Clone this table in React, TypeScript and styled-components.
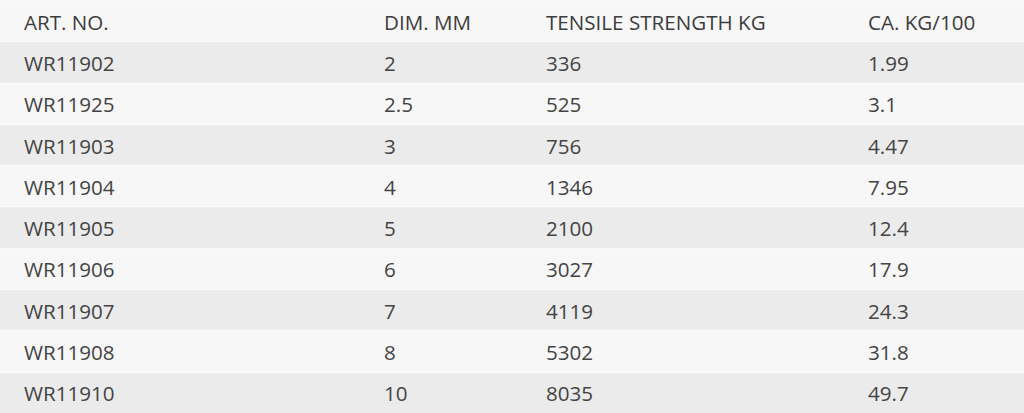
import * as React from 'react';
import styled, { createGlobalStyle } from 'styled-components';

const GlobalStyle = createGlobalStyle`
  html, body {
    margin: 0;
    padding: 0;
    background: #fff;
  }
  body {
    font-family: 'Open Sans', 'Liberation Sans', sans-serif;
  }
`;

const Table = styled.div`
  width: 1024px;
  display: grid;
  grid-template-columns: 360px 162px 322px 1fr;
  grid-auto-rows: 41.3px;
`;

const Row = styled.div<{ $shaded?: boolean }>`
  display: contents;
  & > div {
    background: ${({ $shaded }) => ($shaded ? '#ebebeb' : '#f7f7f7')};
    box-shadow: inset 0 1px 0 #fafafa;
  }
`;

const Cell = styled.div<{ $head?: boolean }>`
  display: flex;
  align-items: center;
  padding: 2px 0 0 24px;
  font-size: 20.6px;
  color: ${({ $head }) => ($head ? '#3d3d3d' : '#444')};
  white-space: nowrap;
`;

const rows: [string, string, string, string][] = [
  ['WR11902', '2', '336', '1.99'],
  ['WR11925', '2.5', '525', '3.1'],
  ['WR11903', '3', '756', '4.47'],
  ['WR11904', '4', '1346', '7.95'],
  ['WR11905', '5', '2100', '12.4'],
  ['WR11906', '6', '3027', '17.9'],
  ['WR11907', '7', '4119', '24.3'],
  ['WR11908', '8', '5302', '31.8'],
  ['WR11910', '10', '8035', '49.7'],
];

export default function App() {
  return (
    <>
      <GlobalStyle />
      <Table>
        <Row>
          <Cell $head>ART. NO.</Cell>
          <Cell $head>DIM. MM</Cell>
          <Cell $head>TENSILE STRENGTH KG</Cell>
          <Cell $head>CA. KG/100</Cell>
        </Row>
        {rows.map((r, i) => (
          <Row key={r[0]} $shaded={i % 2 === 0}>
            {r.map((v, j) => (
              <Cell key={j}>{v}</Cell>
            ))}
          </Row>
        ))}
      </Table>
    </>
  );
}
